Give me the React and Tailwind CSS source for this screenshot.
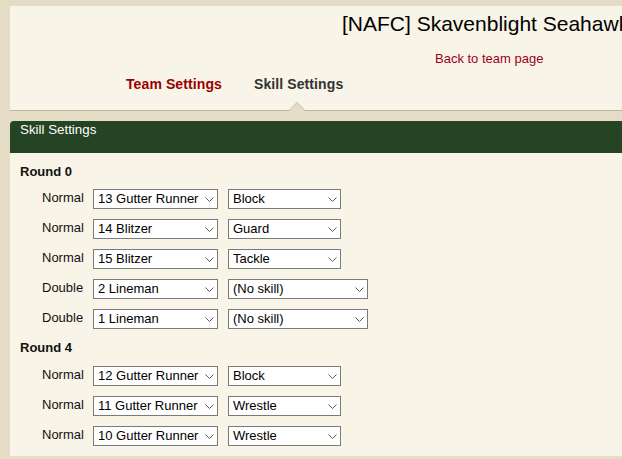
import React from "react";

const F = { fontFamily: '"Liberation Sans", Arial, sans-serif' };

function Chevron() {
  return (
    <svg
      className="pointer-events-none absolute right-[4px] top-[8px]"
      width="9"
      height="5"
      viewBox="0 0 9 5"
    >
      <path d="M0.5 0.5 L4.5 4.5 L8.5 0.5" fill="none" stroke="#5a5a5a" strokeWidth="1" />
    </svg>
  );
}

function Sel({ value, w }) {
  return (
    <div className={`relative h-[20px] ${w} shrink-0`}>
      <select
        defaultValue={value}
        className="block h-[20px] w-full appearance-none rounded-none border border-[#7a7a7a] bg-white pl-[4px] text-[13px] leading-[18px] text-black outline-none"
        style={F}
      >
        <option>{value}</option>
      </select>
      <Chevron />
    </div>
  );
}

function Row({ kind, player, skill }) {
  const long = skill === "(No skill)";
  return (
    <div className="flex items-start pl-[22px]">
      <div className="w-[51px] shrink-0 pt-[1px] text-[13px] leading-[16px] text-[#111]">{kind}</div>
      <Sel value={player} w="w-[125px]" />
      <div className="w-[10px] shrink-0" />
      <Sel value={skill} w={long ? "w-[140px]" : "w-[113px]"} />
    </div>
  );
}

const rounds = [
  {
    name: "Round 0",
    rows: [
      ["Normal", "13 Gutter Runner", "Block"],
      ["Normal", "14 Blitzer", "Guard"],
      ["Normal", "15 Blitzer", "Tackle"],
      ["Double", "2 Lineman", "(No skill)"],
      ["Double", "1 Lineman", "(No skill)"],
    ],
  },
  {
    name: "Round 4",
    rows: [
      ["Normal", "12 Gutter Runner", "Block"],
      ["Normal", "11 Gutter Runner", "Wrestle"],
      ["Normal", "10 Gutter Runner", "Wrestle"],
    ],
  },
];

export default function App() {
  return (
    <div className="h-[459px] w-full overflow-hidden bg-[#e5dcc6] pl-[10px] pt-[6px]" style={F}>
      {/* header */}
      <div className="relative h-[105px] border-b border-[#bfb49c] bg-[#f8f4e7]">
        <div className="whitespace-nowrap pl-[332px] pt-[6px] text-[21px] leading-[24px] text-black">
          [NAFC] Skavenblight Seahawks
        </div>
        <div className="mt-[15px] pl-[425px] text-[13px] leading-[16px] text-[#9a0022]">
          Back to team page
        </div>
        <div className="mt-[8px] flex gap-[32px] pl-[116px] text-[14px] font-bold leading-[18px] tracking-[0.1px]">
          <span className="text-[#990000]">Team Settings</span>
          <span className="text-[#333333]">Skill Settings</span>
        </div>
        <svg className="absolute left-[279px] top-[96px]" width="16" height="10" viewBox="0 0 16 10">
          <polygon points="0,9 8,1 16,9 16,10 0,10" fill="#e5dcc6" />
          <path d="M0 8.5 L8 0.5 L16 8.5" fill="none" stroke="#bfb49c" strokeWidth="1" />
        </svg>
      </div>

      {/* green bar */}
      <div className="mt-[10px] h-[32px] rounded-tl-[4px] bg-[#244423] pl-[10px] pt-[1px] text-[13.33px] leading-[16px] text-white">
        Skill Settings
      </div>

      {/* content */}
      <div className="bg-[#f8f4e7] pb-[10px] pl-[10px] pt-[11px]">
        {rounds.map((r, i) => (
          <div key={r.name} className={i > 0 ? "mt-[11px]" : ""}>
            <div className="text-[13px] font-bold leading-[16px] text-[#111]">{r.name}</div>
            <div className={`${i > 0 ? "mt-[10px]" : "mt-[9px]"} flex flex-col gap-[10px]`}>
              {r.rows.map((row, j) => (
                <Row key={j} kind={row[0]} player={row[1]} skill={row[2]} />
              ))}
            </div>
          </div>
        ))}
      </div>
    </div>
  );
}
